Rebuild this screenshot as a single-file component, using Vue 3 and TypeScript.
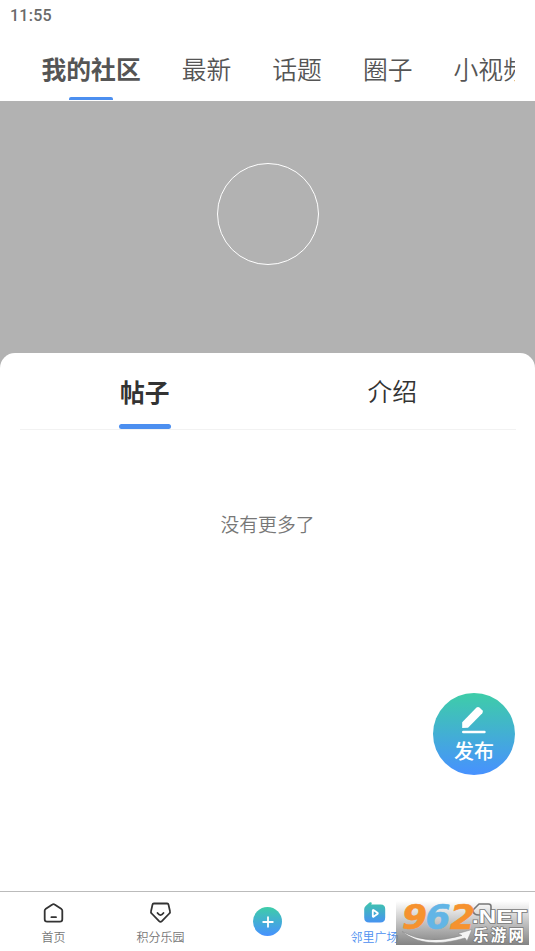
<script setup lang="ts">
import { ref } from 'vue'

const channels: string[] = ['我的社区', '最新', '话题', '圈子', '小视频']
const sections: string[] = ['帖子', '介绍']
const channel = ref(0)
const section = ref(0)
</script>

<template>
  <div class="screen">
    <div class="status">11:55</div>
    <nav class="channels">
      <button
        v-for="(name, i) in channels"
        :key="name"
        class="channel"
        :class="{ active: channel === i }"
        @click="channel = i"
      >{{ name }}</button>
    </nav>

    <header class="cover"><div class="avatar"></div></header>

    <main class="sheet">
      <nav class="sections">
        <button
          v-for="(name, i) in sections"
          :key="name"
          class="section"
          :class="{ active: section === i }"
          @click="section = i"
        ><span>{{ name }}</span></button>
      </nav>
      <p class="empty">没有更多了</p>
    </main>

    <button class="publish">
      <svg width="26" height="28" viewBox="0 0 26 28">
        <path d="M1.2 22V16.2L15.5 1.6Q17 .2 18.5 1.6L21.3 4.3Q22.6 5.8 21.3 7.2L7 21.8Z" fill="#fff" />
        <path d="M2.2 26H23.5" stroke="#fff" stroke-width="2.4" stroke-linecap="round" />
      </svg>
      <span>发布</span>
    </button>

    <footer class="tabbar">
      <div class="tab">
        <svg width="22" height="22" viewBox="0 0 22 22" fill="none" stroke="#333" stroke-width="1.8" stroke-linejoin="round" stroke-linecap="round">
          <path d="M1.7 8.7Q1.7 7.7 2.5 7.1L9.4 2.5Q10.5 1.7 11.6 2.5L18.5 7.1Q19.3 7.7 19.3 8.7V17.3Q19.3 19.7 16.9 19.7H4.1Q1.7 19.7 1.7 17.3Z" />
          <path d="M8.4 15.2H13" />
        </svg>
        <span>首页</span>
      </div>
      <div class="tab">
        <svg width="22" height="22" viewBox="0 0 22 22" fill="none" stroke="#333" stroke-width="1.8" stroke-linejoin="round" stroke-linecap="round">
          <path d="M3.9 1.5H17.1Q18.3 1.5 18.5 2.6L20 9.4Q20.3 10.6 19.3 11.5L11.9 19.2Q10.5 20.5 9.1 19.2L1.7 11.5Q.7 10.6 1 9.4L2.5 2.6Q2.7 1.5 3.9 1.5Z" />
          <path d="M7.5 11Q10.5 15.2 13.5 11" />
        </svg>
        <span>积分乐园</span>
      </div>
      <div class="tab">
        <div class="add">
          <svg width="12" height="12" viewBox="0 0 12 12"><path d="M6 1.2V10.8M1.2 6H10.8" stroke="#fff" stroke-width="1.8" stroke-linecap="round" /></svg>
        </div>
      </div>
      <div class="tab current">
        <svg width="22" height="22" viewBox="0 0 22 22">
          <defs>
            <linearGradient id="plaza" x1="0" y1="0" x2="0" y2="1">
              <stop offset="0" stop-color="#3fc5ab" />
              <stop offset="1" stop-color="#4793f1" />
            </linearGradient>
          </defs>
          <path d="M.2 7Q.3 5.2 1.9 3.7L5.5.5Q6.6-.2 7.4.5T7.2 2.4H16.7Q21.2 2.4 21.2 7V15.5Q21.2 20.5 16.2 20.5H5.2Q.2 20.5 .2 15.5Z" fill="url(#plaza)" />
          <path d="M8.8 8.6Q8.8 7.7 9.8 8.2L13.4 10.8Q14.2 11.4 13.4 12L9.8 14.6Q8.8 15.1 8.8 14.2Z" fill="none" stroke="#fff" stroke-width="1.8" stroke-linejoin="round" />
        </svg>
        <span>邻里广场</span>
      </div>
      <div class="tab">
        <svg width="22" height="22" viewBox="0 0 22 22" fill="none" stroke="#777" stroke-width="1.6" stroke-linejoin="round">
          <path d="M2 8L8 2H17.5Q20 2 20 4.5V17L15 13H8Q2 13 2 8Z" />
        </svg>
      </div>
    </footer>

    <div class="watermark">
      <svg width="133" height="44" viewBox="0 0 133 44">
        <g class="digits" font-size="33">
          <text x="6" y="28" fill="#f6922f" stroke="#f6922f" textLength="25" lengthAdjust="spacingAndGlyphs">9</text>
          <text x="29.5" y="28" fill="#62b5e6" stroke="#62b5e6" textLength="25" lengthAdjust="spacingAndGlyphs">6</text>
          <text x="54" y="28" fill="#f6922f" stroke="#f6922f" textLength="25" lengthAdjust="spacingAndGlyphs">2</text>
        </g>
        <path d="M6 30.5Q31 45 66 34.5L62 32.5L76 28.5L71 40L69 37Q28 49 6 30.5Z" fill="#f4f4f4" stroke="#888" stroke-width=".5" />
        <g fill="#fff" stroke="#777" stroke-width="1.4" paint-order="stroke">
          <text class="latin" x="76" y="21.5" font-size="18" textLength="55" lengthAdjust="spacingAndGlyphs">.NET</text>
          <text class="chinese" x="77" y="39.5" font-size="15.5" textLength="51">乐游网</text>
        </g>
      </svg>
    </div>
  </div>
</template>

<style>
body { margin: 0; background: #fff; }
</style>

<style scoped>
.screen {
  position: relative;
  display: flex;
  flex-direction: column;
  width: 535px;
  height: 951px;
  overflow: hidden;
  background: #fff;
  font-family: Roboto, "Noto Sans CJK SC", sans-serif;
}
button { padding: 0; border: 0; background: none; font-family: inherit; cursor: pointer; }
.status {
  height: 40px;
  padding-left: 10px;
  box-sizing: border-box;
  color: #6a6a6a;
  font-size: 16px;
  font-weight: 500;
  line-height: 31px;
  letter-spacing: .25px;
}
.channels {
  display: flex;
  gap: 41px;
  height: 61px;
  margin: 0 20px;
  padding-left: 21.5px;
  box-sizing: border-box;
  overflow: hidden;
}
.channel {
  position: relative;
  flex: none;
  height: 61px;
  color: #555;
  font-size: 24.8px;
  font-weight: 350;
  line-height: 62px;
  white-space: nowrap;
}
.channel.active { font-weight: 700; }
.channel.active::after {
  content: "";
  position: absolute;
  left: 50%;
  bottom: 1px;
  width: 44px;
  height: 3px;
  margin-left: -22px;
  border-radius: 2px 2px 0 0;
  background: #4c8ff0;
}
.cover {
  display: flex;
  flex: none;
  justify-content: center;
  height: 268px;
  padding-top: 62px;
  box-sizing: border-box;
  background: #b2b2b2;
}
.avatar { width: 102px; height: 102px; box-sizing: border-box; border: 1px solid #fff; border-radius: 50%; }
.sheet {
  flex: 1;
  margin-top: -16px;
  border-radius: 15px 15px 0 0;
  background: #fff;
}
.sections {
  display: flex;
  height: 77px;
  margin: 0 19px 0 20px;
  box-sizing: border-box;
  border-bottom: 1px solid #f2f2f2;
}
.section { flex: 1; height: 76px; color: #333; font-size: 24.8px; font-weight: 350; line-height: 80px; }
.section span { position: relative; display: inline-block; height: 76px; }
.section.active { font-weight: 700; line-height: 82px; padding-left: 1px; }
.section.active span::after {
  content: "";
  position: absolute;
  left: -1px;
  right: -1px;
  bottom: 0;
  height: 5px;
  border-radius: 3px;
  background: #4c8ff0;
}
.empty {
  margin: 81px 0 0;
  color: #777;
  font-size: 18.8px;
  font-weight: 350;
  line-height: 30px;
  text-align: center;
}
.publish {
  position: absolute;
  left: 433px;
  top: 693px;
  display: flex;
  flex-direction: column;
  align-items: center;
  width: 82px;
  height: 82px;
  padding-top: 13px;
  border-radius: 50%;
  background: linear-gradient(#3ecda8, #4791ff);
  color: #fff;
  font-size: 20px;
  font-weight: 500;
  line-height: 36px;
}
.publish svg { flex: none; }
.tabbar {
  display: flex;
  flex: none;
  height: 60px;
  box-sizing: border-box;
  border-top: 1px solid #bbb;
}
.tab {
  display: flex;
  flex: 1;
  flex-direction: column;
  align-items: center;
  gap: 4px;
  padding-top: 10px;
  color: #777;
  font-size: 12px;
  font-weight: 350;
  line-height: 20px;
}
.tab svg { flex: none; }
.tab.current { color: #4c8ff0; }
.add {
  display: flex;
  align-items: center;
  justify-content: center;
  width: 29px;
  height: 29px;
  margin-top: 5px;
  border-radius: 50%;
  background: linear-gradient(#3ecda8, #4791ff);
}
.watermark {
  position: absolute;
  left: 396px;
  top: 901px;
  width: 133px;
  height: 44px;
  background: linear-gradient(rgba(125, 125, 125, 0), rgba(125, 125, 125, .95));
}
.watermark svg { display: block; }
.digits { font-family: "DejaVu Sans", sans-serif; font-weight: 700; font-style: italic; stroke-width: .6; }
.latin { font-family: "Liberation Sans", sans-serif; font-weight: 700; }
.chinese { font-family: "Noto Sans CJK SC", sans-serif; font-weight: 700; }
</style>
